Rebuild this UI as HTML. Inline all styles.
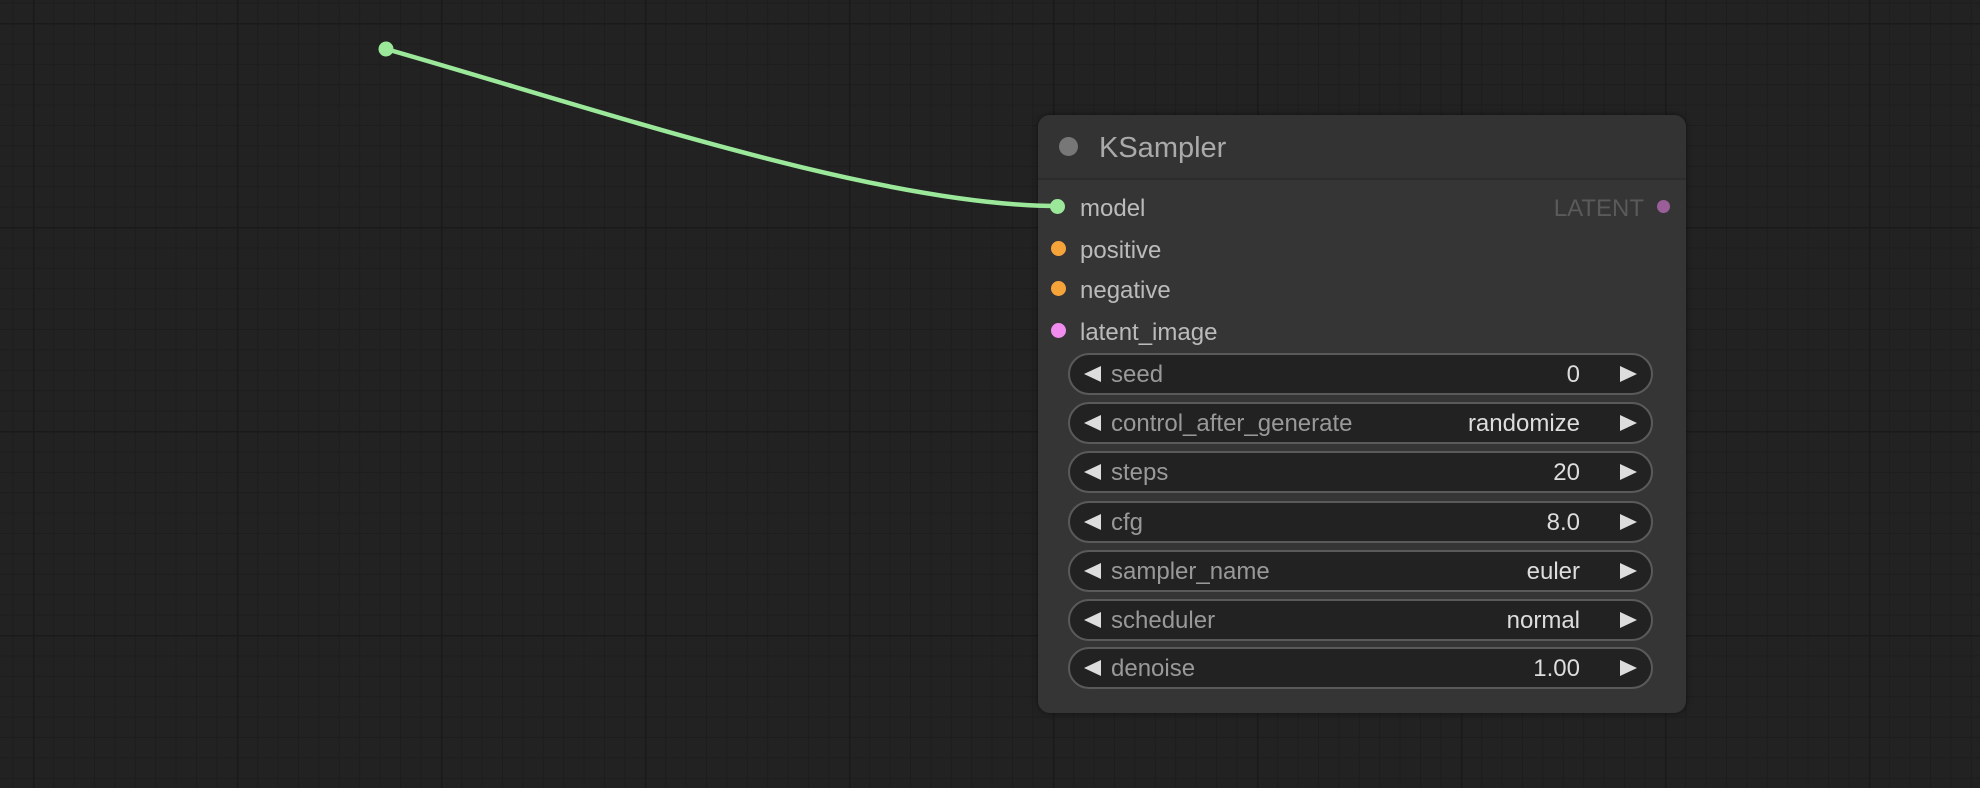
<!DOCTYPE html>
<html><head><meta charset="utf-8"><style>
html,body{margin:0;padding:0;width:1980px;height:788px;overflow:hidden;background:#222;font-family:"Liberation Sans",Arial,sans-serif}
#grid{position:absolute;left:0;top:0}
#link{position:absolute;left:0;top:0;z-index:5}
.node{position:absolute;left:1038px;top:115px;width:648px;height:598px;background:#353535;border-radius:12px;box-shadow:0 0 6px rgba(0,0,0,.5)}
.title{position:absolute;left:0;top:0;width:648px;height:63px;background:#333;border-radius:12px 12px 0 0;border-bottom:2px solid #2c2c2c}
.tdot{position:absolute;left:21px;top:22px;width:19px;height:19px;border-radius:50%;background:#777}
.ttext{position:absolute;left:61px;top:17px;font-size:29px;color:#aaa}
.slot{position:absolute;font-size:24px;color:#bbb;line-height:26px}
.dot{position:absolute;width:15px;height:15px;border-radius:50%}
.w{position:absolute;left:30px;width:581px;height:38px;border:2px solid #5a5a5a;border-radius:21px;background:#222;font-size:24px;line-height:40px}
.w .l{position:absolute;left:41px;color:#999}
.w .v{position:absolute;right:71px;color:#ddd}
.w .al{position:absolute;left:14px;top:11px;width:0;height:0;border-top:8px solid transparent;border-bottom:8px solid transparent;border-right:17px solid #ddd}
.w .ar{position:absolute;right:14px;top:11px;width:0;height:0;border-top:8px solid transparent;border-bottom:8px solid transparent;border-left:17px solid #ddd}
</style></head><body>
<svg id="grid" width="1980" height="788">
<defs>
<pattern id="mi" width="20.4" height="20.4" patternUnits="userSpaceOnUse" x="12.4" y="2.6"><path d="M0 0H20.4M0 0V20.4" stroke="#1d1d1d" stroke-width="2" fill="none"/></pattern>
<pattern id="ma" width="204" height="204" patternUnits="userSpaceOnUse" x="33" y="23"><path d="M0 0H204M0 0V204" stroke="#1a1a1a" stroke-width="3" fill="none"/></pattern>
</defs>
<rect width="1980" height="788" fill="url(#mi)"/>
<rect width="1980" height="788" fill="url(#ma)"/>
</svg>
<svg id="link" width="1980" height="788">
<path d="M386 49 C600 110 880 206 1058 206" stroke="#9be89b" stroke-width="4.5" fill="none"/>
<circle cx="386" cy="49" r="7.5" fill="#9be89b"/>
</svg>
<div class="node">
<div class="title"><div class="tdot"></div><div class="ttext">KSampler</div></div>
<div class="dot" style="left:12px;top:84px;background:#9be89b"></div><div class="slot" style="left:42px;top:81px">model</div>
<div class="slot" style="right:42px;top:81px;color:#5a5a5a">LATENT</div><div class="dot" style="left:619px;top:85px;width:13px;height:13px;background:#9a5f98"></div>
<div class="dot" style="left:13px;top:126px;background:#f5a43a"></div><div class="slot" style="left:42px;top:123px">positive</div>
<div class="dot" style="left:13px;top:166px;background:#f5a43a"></div><div class="slot" style="left:42px;top:163px">negative</div>
<div class="dot" style="left:13px;top:208px;background:#f08cf0"></div><div class="slot" style="left:42px;top:205px">latent_image</div>
<div class="w" style="top:238px"><div class="al"></div><span class="l">seed</span><span class="v">0</span><div class="ar"></div></div>
<div class="w" style="top:287px"><div class="al"></div><span class="l">control_after_generate</span><span class="v">randomize</span><div class="ar"></div></div>
<div class="w" style="top:336px"><div class="al"></div><span class="l">steps</span><span class="v">20</span><div class="ar"></div></div>
<div class="w" style="top:386px"><div class="al"></div><span class="l">cfg</span><span class="v">8.0</span><div class="ar"></div></div>
<div class="w" style="top:435px"><div class="al"></div><span class="l">sampler_name</span><span class="v">euler</span><div class="ar"></div></div>
<div class="w" style="top:484px"><div class="al"></div><span class="l">scheduler</span><span class="v">normal</span><div class="ar"></div></div>
<div class="w" style="top:532px"><div class="al"></div><span class="l">denoise</span><span class="v">1.00</span><div class="ar"></div></div>
</div>
</body></html>
